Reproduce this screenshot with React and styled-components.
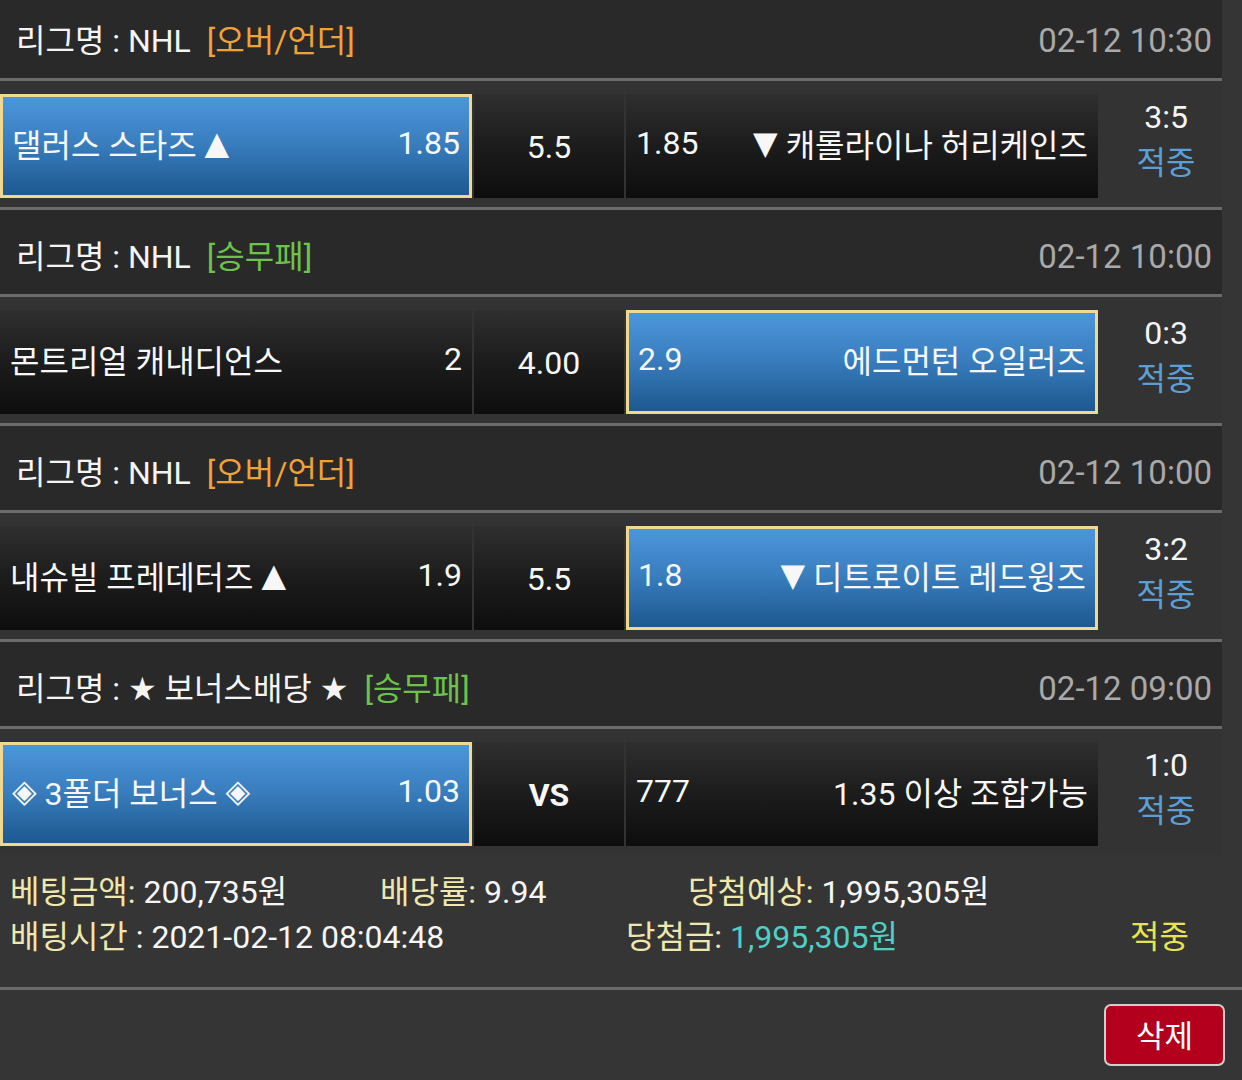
import React from 'react';
import styled, { createGlobalStyle } from 'styled-components';

const FONT = 'Roboto, "DejaVu Sans", "Noto Sans CJK KR", sans-serif';

const Global = createGlobalStyle`
  html, body { margin: 0; padding: 0; background: #353535; }
  body {
    font-family: ${FONT};
    color: #fff;
    overflow: hidden;
  }
`;

const Page = styled.div`
  width: 1242px;
  height: 1080px;
  background: #353535;
  overflow: hidden;
`;

const List = styled.div`
  width: 1222px;
  margin-top: -6px;
`;

const LeagueHeader = styled.div`
  box-sizing: border-box;
  height: 87px;
  padding: 9px 10px 0 16px;
  display: flex;
  align-items: center;
  justify-content: space-between;
  background: #292929;
  border-bottom: 3px solid #6b6b6b;
  font-size: 32px;
  line-height: 40px;
  white-space: nowrap;
`;

const LeagueName = styled.div`
  color: #f4f4f4;
`;

const BetType = styled.span`
  margin-left: 16px;
  color: ${(p) => (p.$kind === 'ou' ? '#f0a23a' : '#6cc24a')};
`;

const DateText = styled.div`
  color: #a9a9a9;
  font-size: 33px;
`;

const MatchRow = styled.div`
  box-sizing: border-box;
  height: ${(p) => (p.$last ? '126px' : '129px')};
  padding: 13px 0 9px;
  display: grid;
  grid-template-columns: 472px 150px 472px 1fr;
  column-gap: 2px;
  background: #333;
  border-bottom: ${(p) => (p.$last ? 'none' : '3px solid #6b6b6b')};
`;

const Cell = styled.div`
  box-sizing: border-box;
  height: 104px;
  display: flex;
  align-items: center;
  justify-content: ${(p) => (p.$center ? 'center' : 'space-between')};
  padding: ${(p) => (p.$center ? '2px' : '0')} ${(p) => (p.$selected ? '9px' : '10px')}
    ${(p) => (p.$center ? '0' : '6px')};
  border: ${(p) => (p.$selected ? '3px solid #f2d88e' : 'none')};
  background: ${(p) =>
    p.$selected
      ? 'linear-gradient(to bottom, #4b96da 0%, #3a7fc0 45%, #1d5890 100%)'
      : 'linear-gradient(to bottom, #2f2f2f 0%, #1c1c1c 50%, #0d0d0d 100%)'};
  font-size: 32px;
  font-weight: ${(p) => (p.$bold ? 700 : 400)};
  color: #f7f7f7;
  white-space: nowrap;
`;

const Mark = styled.span`
  vertical-align: 3px;
`;

const Result = styled.div`
  padding-left: 10px;
  display: flex;
  flex-direction: column;
  align-items: center;
  font-size: 32px;
  line-height: 46px;
`;

const Score = styled.div`
  color: #f4f4f4;
`;

const Hit = styled.div`
  color: #5b9fd8;
`;

const Summary = styled.div`
  padding: 11px 0 31px 10px;
  border-bottom: 3px solid #6b6b6b;
`;

const SummaryLine = styled.div`
  display: grid;
  grid-template-columns: ${(p) => p.$cols};
  height: 45px;
  align-items: center;
  font-size: 32px;
  white-space: nowrap;
`;

const Label = styled.span`
  color: #efe7ad;
`;

const Value = styled.span`
  color: ${(p) => (p.$tone === 'teal' ? '#4fcfc6' : '#f6f6f6')};
`;

const Status = styled.span`
  color: #e8e34e;
`;

const Actions = styled.div`
  display: flex;
  justify-content: flex-end;
  padding: 14px 17px 0 0;
`;

const DeleteButton = styled.button`
  box-sizing: border-box;
  width: 121px;
  height: 62px;
  background: #b3001c;
  border: 2px solid #cfcfcf;
  border-radius: 7px;
  color: #fff;
  font-family: ${FONT};
  font-size: 31px;
  padding: 0 0 4px;
`;

const games = [
  {
    league: 'NHL',
    type: 'ou',
    typeLabel: '[오버/언더]',
    date: '02-12 10:30',
    home: '댈러스 스타즈 ▲',
    homeOdds: '1.85',
    mid: '5.5',
    away: '▼ 캐롤라이나 허리케인즈',
    awayOdds: '1.85',
    pick: 'home',
    score: '3:5',
  },
  {
    league: 'NHL',
    type: 'wdl',
    typeLabel: '[승무패]',
    date: '02-12 10:00',
    home: '몬트리얼 캐내디언스',
    homeOdds: '2',
    mid: '4.00',
    away: '에드먼턴 오일러즈',
    awayOdds: '2.9',
    pick: 'away',
    score: '0:3',
  },
  {
    league: 'NHL',
    type: 'ou',
    typeLabel: '[오버/언더]',
    date: '02-12 10:00',
    home: '내슈빌 프레데터즈 ▲',
    homeOdds: '1.9',
    mid: '5.5',
    away: '▼ 디트로이트 레드윙즈',
    awayOdds: '1.8',
    pick: 'away',
    score: '3:2',
  },
  {
    league: '★ 보너스배당 ★',
    type: 'wdl',
    typeLabel: '[승무패]',
    date: '02-12 09:00',
    home: '◈ 3폴더 보너스 ◈',
    homeOdds: '1.03',
    mid: 'VS',
    midBold: true,
    away: '1.35 이상 조합가능',
    awayOdds: '777',
    pick: 'home',
    score: '1:0',
  },
];

function TeamName({ text }) {
  const parts = text.split(/([▲▼◈])/);
  return (
    <span>
      {parts.map((part, i) =>
        /[▲▼◈]/.test(part) ? <Mark key={i}>{part}</Mark> : <React.Fragment key={i}>{part}</React.Fragment>
      )}
    </span>
  );
}

export default function App() {
  return (
    <Page>
      <Global />
      <List>
        {games.map((g, i) => (
          <React.Fragment key={i}>
            <LeagueHeader>
              <LeagueName>
                리그명 : {g.league}
                <BetType $kind={g.type}>{g.typeLabel}</BetType>
              </LeagueName>
              <DateText>{g.date}</DateText>
            </LeagueHeader>
            <MatchRow $last={i === games.length - 1}>
              <Cell $selected={g.pick === 'home'}>
                <TeamName text={g.home} />
                <span>{g.homeOdds}</span>
              </Cell>
              <Cell $center $bold={g.midBold}>
                {g.mid}
              </Cell>
              <Cell $selected={g.pick === 'away'}>
                <span>{g.awayOdds}</span>
                <TeamName text={g.away} />
              </Cell>
              <Result>
                <Score>{g.score}</Score>
                <Hit>적중</Hit>
              </Result>
            </MatchRow>
          </React.Fragment>
        ))}
      </List>
      <Summary>
        <SummaryLine $cols="370px 308px 1fr">
          <span>
            <Label>베팅금액:</Label> <Value>200,735원</Value>
          </span>
          <span>
            <Label>배당률:</Label> <Value>9.94</Value>
          </span>
          <span>
            <Label>당첨예상:</Label> <Value>1,995,305원</Value>
          </span>
        </SummaryLine>
        <SummaryLine $cols="616px 504px 1fr">
          <span>
            <Label>배팅시간</Label> <Value>: 2021-02-12 08:04:48</Value>
          </span>
          <span>
            <Label>당첨금:</Label> <Value $tone="teal">1,995,305원</Value>
          </span>
          <Status>적중</Status>
        </SummaryLine>
      </Summary>
      <Actions>
        <DeleteButton>삭제</DeleteButton>
      </Actions>
    </Page>
  );
}
